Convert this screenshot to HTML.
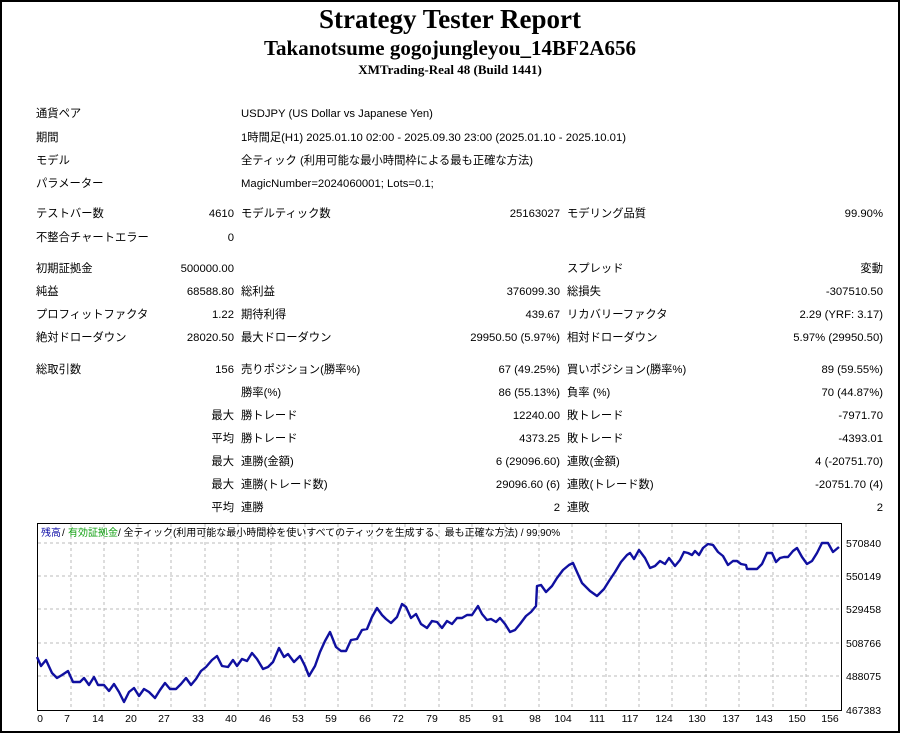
<!DOCTYPE html>
<html><head><meta charset="utf-8"><style>
html,body{margin:0;padding:0;background:#fff}
#pg{position:relative;width:896px;height:729px;border:2px solid #000;overflow:hidden;font-family:"Liberation Sans","Noto Sans CJK JP",sans-serif;font-size:11.3px;color:#000}
.t{position:absolute;white-space:nowrap;line-height:14px}
.r{text-align:right}
.h{position:absolute;left:0;width:896px;text-align:center;font-family:"Liberation Serif",serif;font-weight:bold;white-space:nowrap}
</style></head><body><div id="pg">
<div class="h" style="top:2px;font-size:27px">Strategy Tester Report</div>
<div class="h" style="top:34px;font-size:21px">Takanotsume gogojungleyou_14BF2A656</div>
<div class="h" style="top:60px;font-size:13px">XMTrading-Real 48 (Build 1441)</div>

<div class="t" style="left:34px;top:105px">通貨ペア</div><div class="t" style="left:239px;top:105px">USDJPY (US Dollar vs Japanese Yen)</div>
<div class="t" style="left:34px;top:129px">期間</div><div class="t" style="left:239px;top:129px">1時間足(H1) 2025.01.10 02:00 - 2025.09.30 23:00 (2025.01.10 - 2025.10.01)</div>
<div class="t" style="left:34px;top:152px">モデル</div><div class="t" style="left:239px;top:152px">全ティック (利用可能な最小時間枠による最も正確な方法)</div>
<div class="t" style="left:34px;top:175px">パラメーター</div><div class="t" style="left:239px;top:175px">MagicNumber=2024060001; Lots=0.1;</div>

<div class="t" style="left:34px;top:205px">テストバー数</div><div class="t r" style="right:664px;top:205px">4610</div><div class="t" style="left:239px;top:205px">モデルティック数</div><div class="t r" style="right:338px;top:205px">25163027</div><div class="t" style="left:565px;top:205px">モデリング品質</div><div class="t r" style="right:15px;top:205px">99.90%</div>
<div class="t" style="left:34px;top:229px">不整合チャートエラー</div><div class="t r" style="right:664px;top:229px">0</div>

<div class="t" style="left:34px;top:260px">初期証拠金</div><div class="t r" style="right:664px;top:260px">500000.00</div><div class="t" style="left:565px;top:260px">スプレッド</div><div class="t r" style="right:15px;top:260px">変動</div>
<div class="t" style="left:34px;top:283px">純益</div><div class="t r" style="right:664px;top:283px">68588.80</div><div class="t" style="left:239px;top:283px">総利益</div><div class="t r" style="right:338px;top:283px">376099.30</div><div class="t" style="left:565px;top:283px">総損失</div><div class="t r" style="right:15px;top:283px">-307510.50</div>
<div class="t" style="left:34px;top:306px">プロフィットファクタ</div><div class="t r" style="right:664px;top:306px">1.22</div><div class="t" style="left:239px;top:306px">期待利得</div><div class="t r" style="right:338px;top:306px">439.67</div><div class="t" style="left:565px;top:306px">リカバリーファクタ</div><div class="t r" style="right:15px;top:306px">2.29 (YRF: 3.17)</div>
<div class="t" style="left:34px;top:329px">絶対ドローダウン</div><div class="t r" style="right:664px;top:329px">28020.50</div><div class="t" style="left:239px;top:329px">最大ドローダウン</div><div class="t r" style="right:338px;top:329px">29950.50 (5.97%)</div><div class="t" style="left:565px;top:329px">相対ドローダウン</div><div class="t r" style="right:15px;top:329px">5.97% (29950.50)</div>

<div class="t" style="left:34px;top:361px">総取引数</div><div class="t r" style="right:664px;top:361px">156</div><div class="t" style="left:239px;top:361px">売りポジション(勝率%)</div><div class="t r" style="right:338px;top:361px">67 (49.25%)</div><div class="t" style="left:565px;top:361px">買いポジション(勝率%)</div><div class="t r" style="right:15px;top:361px">89 (59.55%)</div>
<div class="t" style="left:239px;top:384px">勝率(%)</div><div class="t r" style="right:338px;top:384px">86 (55.13%)</div><div class="t" style="left:565px;top:384px">負率 (%)</div><div class="t r" style="right:15px;top:384px">70 (44.87%)</div>
<div class="t r" style="right:664px;top:407px">最大</div><div class="t" style="left:239px;top:407px">勝トレード</div><div class="t r" style="right:338px;top:407px">12240.00</div><div class="t" style="left:565px;top:407px">敗トレード</div><div class="t r" style="right:15px;top:407px">-7971.70</div>
<div class="t r" style="right:664px;top:430px">平均</div><div class="t" style="left:239px;top:430px">勝トレード</div><div class="t r" style="right:338px;top:430px">4373.25</div><div class="t" style="left:565px;top:430px">敗トレード</div><div class="t r" style="right:15px;top:430px">-4393.01</div>
<div class="t r" style="right:664px;top:453px">最大</div><div class="t" style="left:239px;top:453px">連勝(金額)</div><div class="t r" style="right:338px;top:453px">6 (29096.60)</div><div class="t" style="left:565px;top:453px">連敗(金額)</div><div class="t r" style="right:15px;top:453px">4 (-20751.70)</div>
<div class="t r" style="right:664px;top:476px">最大</div><div class="t" style="left:239px;top:476px">連勝(トレード数)</div><div class="t r" style="right:338px;top:476px">29096.60 (6)</div><div class="t" style="left:565px;top:476px">連敗(トレード数)</div><div class="t r" style="right:15px;top:476px">-20751.70 (4)</div>
<div class="t r" style="right:664px;top:499px">平均</div><div class="t" style="left:239px;top:499px">連勝</div><div class="t r" style="right:338px;top:499px">2</div><div class="t" style="left:565px;top:499px">連敗</div><div class="t r" style="right:15px;top:499px">2</div>

<svg style="position:absolute;left:-2px;top:-2px" width="900" height="733" font-family="Liberation Sans, Noto Sans CJK JP, sans-serif" font-size="10">
<rect x="37.5" y="523.5" width="804" height="187" fill="none" stroke="#000"/>
<g stroke="#bbb" stroke-dasharray="3,3" fill="none">
<path d="M38 543H841M38 576H841M38 609H841M38 643H841M38 676H841"/>
<path d="M71 524V710M104 524V710M138 524V710M171 524V710M205 524V710M238 524V710M271 524V710M305 524V710M338 524V710M372 524V710M405 524V710M439 524V710M472 524V710M505 524V710M539 524V710M572 524V710M606 524V710M639 524V710M672 524V710M706 524V710M739 524V710M773 524V710M806 524V710"/>
</g>
<polyline fill="none" stroke="#1010a0" stroke-width="2.4" stroke-linejoin="round" points="37,657 41,666 46,660 52,673 57,678 62,675 68,671 73,682 80,682 84,678 89,685 94,677 98,685 104,685 109,691 114,684 119,692 124,702 129,692 134,688 139,696 144,689 149,692 155,698 160,690 165,683 170,689 176,689 181,684 186,678 191,685 196,679 201,671 206,667 212,660 217,656 222,666 228,667 233,660 237,666 242,659 247,661 252,653 257,659 263,669 268,667 273,662 279,648 284,657 288,654 294,662 300,656 305,666 309,676 315,666 320,652 325,641 330,632 336,647 341,651 346,651 351,640 357,639 362,630 367,629 372,617 377,608 382,615 386,619 391,623 397,617 402,604 406,607 411,618 416,614 421,624 427,628 432,621 437,622 442,628 447,621 452,624 457,618 462,618 467,615 472,615 478,606 482,614 487,620 491,619 496,622 500,618 505,624 510,632 515,630 520,624 526,616 531,612 536,606 537,586 541,585 546,592 552,586 557,578 563,570 569,565 573,563 577,572 582,583 590,591 597,596 604,589 609,581 615,572 621,562 627,555 630,553 634,559 639,550 645,558 650,568 655,566 660,561 665,564 669,558 675,566 680,560 684,552 688,553 692,555 695,551 699,555 703,548 708,544 713,545 718,552 723,556 728,565 733,561 737,561 741,564 746,565 747,569 750,569 757,569 762,564 767,553 772,553 776,562 780,558 784,557 788,557 793,551 797,548 802,557 807,564 812,561 817,553 822,543 828,543 833,552 839,547"/>
<text x="41" y="536" fill="#1010a8">残高</text><text x="62" y="536">/</text><text x="68" y="536" fill="#10a010">有効証拠金</text><text x="118" y="536">/ 全ティック(利用可能な最小時間枠を使いすべてのティックを生成する、最も正確な方法) / 99.90%</text>
<g font-size="10.5">
<text x="846" y="547">570840</text><text x="846" y="580">550149</text><text x="846" y="613">529458</text><text x="846" y="647">508766</text><text x="846" y="680">488075</text><text x="846" y="714">467383</text>
</g>
<g font-size="10.5" text-anchor="middle">
<text x="40" y="722">0</text><text x="67" y="722">7</text><text x="98" y="722">14</text><text x="131" y="722">20</text><text x="164" y="722">27</text><text x="198" y="722">33</text><text x="231" y="722">40</text><text x="265" y="722">46</text><text x="298" y="722">53</text><text x="331" y="722">59</text><text x="365" y="722">66</text><text x="398" y="722">72</text><text x="432" y="722">79</text><text x="465" y="722">85</text><text x="498" y="722">91</text><text x="535" y="722">98</text><text x="563" y="722">104</text><text x="597" y="722">111</text><text x="630" y="722">117</text><text x="664" y="722">124</text><text x="697" y="722">130</text><text x="731" y="722">137</text><text x="764" y="722">143</text><text x="797" y="722">150</text><text x="830" y="722">156</text>
</g>
</svg>
</div></body></html>
